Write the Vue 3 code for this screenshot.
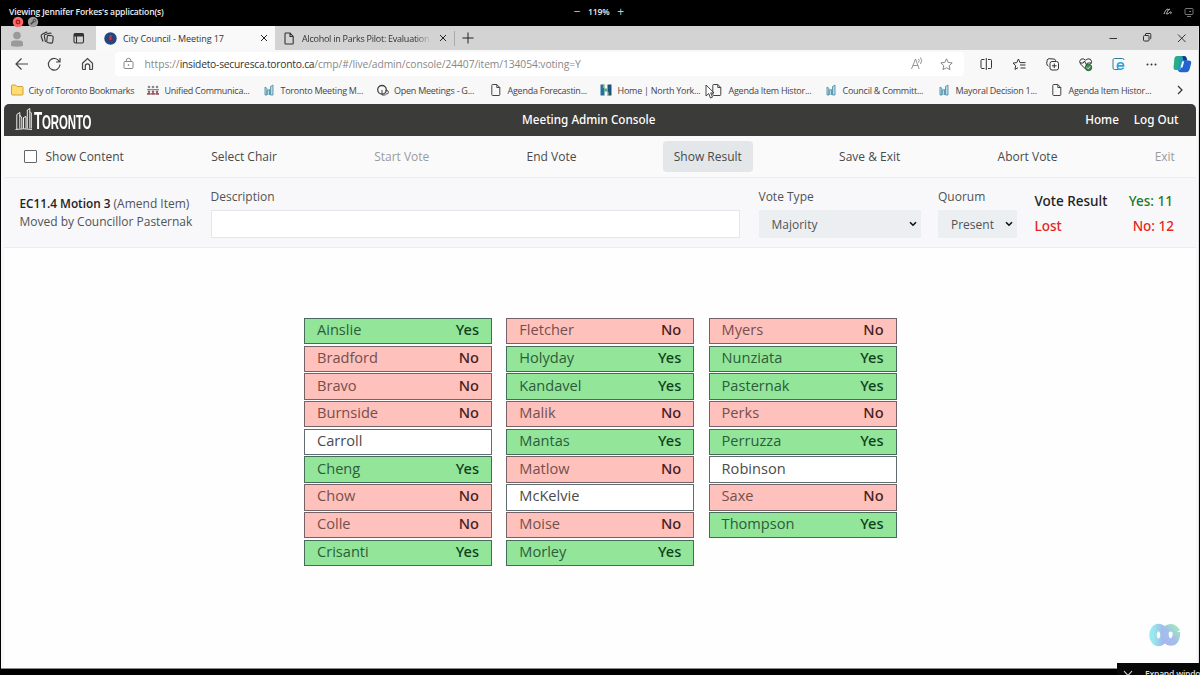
<script setup>
const bookmarks = [
  { icon: 'folder', text: 'City of Toronto Bookmarks', w: 136 },
  { icon: 'people', text: 'Unified Communica...', w: 116 },
  { icon: 'city', text: 'Toronto Meeting M...', w: 113.5 },
  { icon: 'key', text: 'Open Meetings - G...', w: 113.5 },
  { icon: 'doc', text: 'Agenda Forecastin...', w: 110 },
  { icon: 'h', text: 'Home | North York...', w: 111 },
  { icon: 'doc', text: 'Agenda Item Histor...', w: 114 },
  { icon: 'city', text: 'Council & Committ...', w: 113 },
  { icon: 'city', text: 'Mayoral Decision 1...', w: 113 },
  { icon: 'doc', text: 'Agenda Item Histor...', w: 110 }
]
const parse = s => s.split(' ').map(p => {
  const [name, v] = p.split(':')
  return { name, vote: v === 'y' ? 'Yes' : v === 'n' ? 'No' : '' }
})
const columns = [
  parse('Ainslie:y Bradford:n Bravo:n Burnside:n Carroll: Cheng:y Chow:n Colle:n Crisanti:y'),
  parse('Fletcher:n Holyday:y Kandavel:y Malik:n Mantas:y Matlow:n McKelvie: Moise:n Morley:y'),
  parse('Myers:n Nunziata:y Pasternak:y Perks:n Perruzza:y Robinson: Saxe:n Thompson:y')
]
</script>

<template>
  <div class="screen">
    <div class="share">
      <span class="viewing">Viewing Jennifer Forkes's application(s)</span>
      <div class="zoomer"><i>−</i><b>119%</b><i>+</i></div>
      <svg class="share-icons" width="36" height="14" viewBox="0 0 36 14" fill="none" stroke="#ccc">
        <path d="M3 9c2-5 4-6 4-4s-3 4-1 4 3-3 4-2-1 2 0 2M7 5l2-1" />
        <rect x="24" y="3.500" width="8" height="6" rx="1" stroke="#777" /><path d="M28 6.500h2M26 11.500h4" stroke="#777" />
      </svg>
    </div>
    <svg class="badges" width="32" height="12" viewBox="0 0 32 12">
      <circle cx="8" cy="6" r="5.3" fill="#f66a6a" /><circle cx="8" cy="6" r="1.7" fill="none" stroke="#b31c1c" stroke-width="1.5" />
      <circle cx="23" cy="6" r="5.2" fill="#9a9a9a" /><path d="M20.800 8.200l3-3" stroke="#444" stroke-width="1.500" /><circle cx="24.500" cy="4.500" r="1.300" fill="none" stroke="#444" />
    </svg>

    <div class="browser">
      <div class="tabs">
        <svg class="lead" width="92" height="24" viewBox="0 0 92 24" fill="none" stroke="#333" stroke-width="1.1">
          <g fill="#9a9a9a" stroke="none"><circle cx="13" cy="9.500" r="3.800" /><path d="M7 20v-2.600q0-3 3-3h6q3 0 3 3V20q-6 1.500-12 0z" /></g>
          <rect x="43" y="9.500" width="6" height="7.500" rx="1.500" transform="rotate(6 46 13)" />
          <path d="M41.500 16l-1.200-5.700q-.2-1.400 1-1.800l4.500-1.500q1-.2 1.500.8M39 15.500l-1.800-5q-.4-1.500 1-2.200l3.800-2q.8-.3 1.400.1" />
          <rect x="70" y="7.500" width="9.500" height="9.500" rx="1.500" /><path d="M70 9h9.500" stroke-width="3" /><path d="M72.500 10v7" />
        </svg>
        <div class="tab active">
          <svg width="13" height="13" viewBox="0 0 13 13"><circle cx="6.500" cy="6.500" r="6.200" fill="#1a4a86" /><path d="M4 10V6l1-3h3l1 3v4z" fill="#5c3158" /><path d="M5.500 3h2v5h-2z" fill="#bb3e50" /></svg>
          <span class="tabname">City Council - Meeting 17</span>
          <svg class="x" width="8" height="8" viewBox="0 0 8 8" stroke="#222"><path d="M1 1l6 6M7 1L1 7" /></svg>
        </div>
        <div class="tab second">
          <svg width="10" height="13" viewBox="0 0 10 13" fill="none" stroke="#333" stroke-width="1.100"><path d="M1 1.800q0-.8.8-.8H6l3.200 3.500v6.700q0 .8-.8.800H1.800q-.8 0-.8-.8zM6 1v3.500h3.200" /></svg>
          <span class="tabname">Alcohol in Parks Pilot: Evaluation</span>
          <svg class="x" width="8" height="8" viewBox="0 0 8 8" stroke="#222"><path d="M1 1l6 6M7 1L1 7" /></svg>
        </div>
        <svg class="plus" width="12" height="12" viewBox="0 0 12 12" stroke="#222"><path d="M6 .5v11M.5 6h11" /></svg>
        <svg class="win" width="90" height="24" viewBox="0 0 90 24" fill="none" stroke="#333">
          <path d="M8.500 12.500h7.500" /><rect x="42.500" y="9.500" width="5.500" height="5.500" rx="1" /><path d="M44.500 9V8q0-.5.5-.5h4q.8 0 .8.800v4q0 .7-1 .7" />
          <path d="M77 8.500l7.500 7.500M84.500 8.500L77 16" />
        </svg>
      </div>

      <div class="address">
        <svg class="nav" width="98" height="27" viewBox="-3 0 98 27" fill="none" stroke="#444" stroke-width="1.200">
          <path d="M12 14h12M17.500 8.500L12 14l5.500 5.500" />
          <path d="M55.300 11.500A5.800 5.800 0 1 0 56 14.500M56 8v4h-4" />
          <path d="M78.500 13.200l5-4.700 5 4.700v5.500q0 .8-.8.8h-2v-3.500q0-2.200-2.200-2.200t-2.200 2.200v3.500h-2q-.8 0-.8-.8z" />
        </svg>
        <div class="urlbox">
          <svg class="lock" width="11" height="13" viewBox="0 0 11 13" fill="none" stroke="#888"><rect x="1" y="4.500" width="9" height="7" rx="1" /><path d="M3 4.500q0-3.300 2.500-3.300T8 4.500" /><circle cx="5.500" cy="8" r=".5" /></svg>
          <span class="url">https://</span><span class="url host">insideto-securesca.toronto.ca</span><span class="url path">/cmp/#/live/admin/console/24407/item/134054:voting=Y</span>
          <svg class="fav" width="46" height="20" viewBox="0 0 46 20" fill="none" stroke="#888">
            <path d="M2.500 15L6.500 5l3.700 10M4 11.500h5M9.500 5q1.300 1.300 0 3.500M11.500 3.500q2.400 3 0 6.500" stroke-width=".9" />
            <path d="M37.500 4.800l1.700 3.600 4 .5-3 2.800.8 4-3.500-2-3.500 2 .8-4-3-2.800 4-.5z" />
          </svg>
        </div>
        <svg class="tools" width="232" height="27" viewBox="964 0 232 27" fill="none" stroke="#333">
          <path d="M984.500 9.500H982q-1 0-1 1v7q0 1 1 1h2.500M988 9.500h2.500q1 0 1 1v7q0 1-1 1H988M986.300 8v12" />
          <path d="M1018 17.700l-3 1.700.7-3.700-2.700-2.600 3.800-.5 1.600-3.600 1.600 3.600h5.500M1020 15h5.500M1020.500 18h5" />
          <rect x="1050" y="11.500" width="8.500" height="8.500" rx="2" /><path d="M1054.300 13.500v4.500M1052 15.800h4.500M1048.500 16.200q-1.800-.7-1.800-3l.5-3q.5-1.600 2-1.500l5 .4q1.500.4 1.500 1.700" />
          <path d="M1085.500 19l-5-5q-2-3 .5-4.800 2.300-1.200 4.500 1 2.500-2.200 4.800-1 2.300 1.800.5 4.800M1080 13h3.200l1.300-2 2 4 1-2h4" />
          <circle cx="1088.500" cy="17.500" r="3.200" fill="#438b52" stroke="#245f36" /><path d="M1087 17.500l1.200 1.200 2-2.300" stroke="#fff" stroke-width=".8" />
          <path d="M1118 19.500h-3.500q-1.500 0-1.500-1.500v-8q0-1.500 1.500-1.500h8q1.500 0 1.500 1.500" stroke="#367c91" />
          <path d="M1123.500 17.600q-1 1.700-3 1.700-3.100 0-3.100-3.400 0-3.200 3.200-3.200 3 0 3 3.200h-6" stroke="#29a4d8" stroke-width="1.600" />
          <g fill="#333" stroke="none"><circle cx="1147.500" cy="14.500" r="1" /><circle cx="1151.500" cy="14.500" r="1" /><circle cx="1155.500" cy="14.500" r="1" /></g>
          <g stroke="none"><path d="M1177 6h7q2 0 2.600 2l.7 2.500h-2q-2 0-2.700 2.200l-1.700 5.300q-.7 2-2.500 2h-2q-2.500 0-2-3l2-8.500q.6-2.500 3-2.500z" fill="#2196c9" /><path d="M1174.400 8.200Q1175.200 6 1177 6h4l-3.500 13q-.4 1-1.500 1-2.800 0-2.400-3z" fill="#28ad86" /><path d="M1184 10.500h4.500q3.300 0 2.600 3l-1.500 5.800q-.8 3-3.600 3h-5q-2.500 0-3.300-2.300h1q1.600 0 2.300-2z" fill="#2463cf" /><path d="M1182.500 6h1.500q2 0 2.600 2l.7 2.500h-4z" fill="#163b85" /><path d="M1182.200 11.500h2l-1.700 6h-2z" fill="#eefaff" /></g>
        </svg>
      </div>

      <div class="bookmarks">
        <div v-for="(b, i) in bookmarks" :key="i" class="bm" :style="{ width: b.w + 'px' }">
          <svg width="14" height="14" viewBox="0 0 14 14" fill="none" stroke="#444">
            <g v-if="b.icon === 'folder'" stroke="#c7a23c"><path d="M1.500 3q0-1 1-1h3l1.500 1.500h5q1 0 1 1V11q0 1-1 1h-9.500q-1 0-1-1z" fill="#ffdd73" /></g>
            <g v-else-if="b.icon === 'people'" stroke="none"><g fill="#888"><circle cx="3" cy="4" r="1.300" /><circle cx="7" cy="4" r="1.300" /><circle cx="11" cy="4" r="1.300" /><path d="M1 6h12v1.200H1z" /></g><g fill="#94575e"><circle cx="3" cy="8.700" r="1.200" /><circle cx="7" cy="8.700" r="1.200" /><circle cx="11" cy="8.700" r="1.200" /><path d="M1 10h3.700v1.700H1zM5.200 10h3.700v1.700H5.200zM9.400 10H13v1.700H9.400z" /></g></g>
            <g v-else-if="b.icon === 'city'" stroke="#5592a8" stroke-width=".9"><path d="M3 12V4l2 1.500V12zM5 12V7.500l2.500-1V12M8.500 12V3.500L11 2v10z" fill="#b5dae6" /></g>
            <g v-else-if="b.icon === 'key'"><circle cx="6" cy="6.800" r="4.300" stroke-width="1.300" /><path d="M6 7v5h3.500M9.500 7.500q3-.5 3 1.700t-3 1.800" /></g>
            <g v-else-if="b.icon === 'h'" stroke="none"><path d="M1.500 1.500H5.500v11h-4z" fill="#277096" /><path d="M8.500 1.500h4v11h-4z" fill="#1c5381" /><path d="M5.500 5.500h3v3h-3z" fill="#4eaa92" /><path d="M4.300 1.500h1.500v3.500H4.300zM8 9h1.500v3.500H8z" fill="#b6cf5d" /></g>
            <path v-else d="M2.800 2.300q0-.8.800-.8h4.200l3 3v7.200q0 .8-.8.800H3.600q-.8 0-.8-.8zM7.800 1.500v3h3" />
          </svg>
          <span>{{ b.text }}</span>
        </div>
        <svg class="more" width="8" height="10" viewBox="0 0 8 10" fill="none" stroke="#333" stroke-width="1.200"><path d="M2 1l4 4-4 4" /></svg>
        <svg class="cursor" width="11" height="16" viewBox="0 0 11 16" fill="#fff" stroke="#333" stroke-width=".9"><path d="M1 1v11l2.700-2.500 1.800 4.500 2-.9-1.800-4.200H9z" /></svg>
      </div>

      <div class="app">
        <header class="top">
          <div class="logo">
            <svg width="19" height="31" viewBox="0 -1 19 31" fill="none" stroke="#fff" stroke-width=".9"><path d="M1.800 24V9.500l3-2V23.500M4.800 10l2 3v10.500M8.500 23.500V12.500l2.500-1v12M12.300 23.500V5l2.500-1.500v20M14.800 6.500l1.500 1.500v15.500M.5 24.500q8-1.500 16.500 0" /></svg>
            <span class="wordmark"><big>T</big>ORONTO</span>
          </div>
          <span class="title">Meeting Admin Console</span>
          <nav><span>Home</span><span>Log Out</span></nav>
        </header>

        <div class="bar">
          <label class="check"><i></i>Show Content</label>
          <span class="btn">Select Chair</span>
          <span class="btn off">Start Vote</span>
          <span class="btn">End Vote</span>
          <span class="btn on">Show Result</span>
          <span class="btn">Save &amp; Exit</span>
          <span class="btn">Abort Vote</span>
          <span class="btn off">Exit</span>
        </div>

        <div class="motion">
          <div class="item"><p><b>EC11.4 Motion 3</b> (Amend Item)</p><p>Moved by Councillor Pasternak</p></div>
          <div class="field desc"><span>Description</span><div class="input"></div></div>
          <div class="field type"><span>Vote Type</span><div class="select">Majority<svg width="8" height="6" viewBox="0 0 8 6" fill="none" stroke="#111" stroke-width="1.600"><path d="M1 1.200l3 3 3-3" /></svg></div></div>
          <div class="field quorum"><span>Quorum</span><div class="select">Present<svg width="8" height="6" viewBox="0 0 8 6" fill="none" stroke="#111" stroke-width="1.600"><path d="M1 1.200l3 3 3-3" /></svg></div></div>
          <div class="result">
            <div><span>Vote Result</span><span class="green">Yes: 11</span></div>
            <div class="red"><span>Lost</span><span>No: 12</span></div>
          </div>
        </div>

        <main class="votes">
          <div v-for="(col, i) in columns" :key="i" class="col">
            <div v-for="m in col" :key="m.name" class="member" :class="m.vote.toLowerCase()"><span>{{ m.name }}</span><b>{{ m.vote }}</b></div>
          </div>
        </main>
      </div>

      <svg class="mark" width="34" height="26" viewBox="0 0 34 26" fill="none" stroke-width="7.500">
        <defs>
          <linearGradient id="ga"><stop offset="0" stop-color="#9ae9ee" /><stop offset="1" stop-color="#9fb6ea" /></linearGradient>
          <linearGradient id="gb" x1="0" y1="1" x2="1" y2="0"><stop offset="0" stop-color="#a9b6f0" /><stop offset=".5" stop-color="#a2c0ea" /><stop offset="1" stop-color="#a3e6be" /></linearGradient>
        </defs>
        <ellipse cx="11.500" cy="13" rx="5.500" ry="7.500" stroke="url(#ga)" /><path d="M30 10Q26 4.500 22 6q-5 1.500-4 7.500 1 6.500 5.500 6.500 6 0 6-10" stroke="url(#gb)" />
      </svg>
    </div>
    <div class="expand">
      <svg width="10" height="7" viewBox="0 0 10 7" fill="none" stroke="#ddd" stroke-width="1.100"><path d="M1 1l4 4.500L9 1" /></svg>
      <span>Expand window</span>
    </div>
  </div>
</template>

<style>
html, body { margin: 0; background: #000; overflow: hidden; }
</style>
<style scoped>
* { box-sizing: border-box; }
svg { display: block; flex: none; }
p { margin: 0; }
.screen { position: relative; width: 1200px; height: 675px; overflow: hidden; background: #000; font-family: "Open Sans", "Noto Sans", sans-serif; white-space: nowrap; display: flex; flex-direction: column; }
.share { height: 26px; flex: none; display: flex; align-items: center; padding: 0 3px 3px 9px; color: #eee; font-size: 8.6px; font-weight: 600; letter-spacing: -.17px; }
.viewing { width: 564px; }
.zoomer { display: flex; align-items: center; gap: 7px; }
.zoomer i { font-style: normal; font-weight: 400; font-size: 12px; line-height: 12px; color: #ccc; width: 8px; text-align: center; }
.zoomer b { font-weight: 600; }
.share-icons { margin-left: auto; }
.badges { position: absolute; left: 10px; top: 16px; z-index: 3; }
.browser { position: relative; margin: 0 1px 0 1px; height: 643px; background: #f8f8f9; border-bottom: 1px solid #8d8d8d; border-right: 1px solid #ddd; display: flex; flex-direction: column; }
.tabs { height: 24px; flex: none; background: #d3d3d3; display: flex; align-items: center; padding-left: 3px; font-size: 9px; }
.tab { height: 24px; display: flex; align-items: center; color: #333; }
.active { width: 179px; background: #f9f9fa; padding: 0 7px 0 7.5px; }
.active .tabname { margin-left: 6.5px; letter-spacing: -.1px; }
.second { width: 180px; padding: 0 7px 0 9px; border-right: 1px solid #aaa; height: 15px; }
.second .tabname { margin-left: 8px; letter-spacing: -.25px; width: 129px; overflow: hidden; -webkit-mask-image: linear-gradient(90deg, #000 88%, transparent); mask-image: linear-gradient(90deg, #000 88%, transparent); }
.x { margin-left: auto; }
.plus { margin-left: 6.5px; }
.win { margin-left: auto; margin-right: 7px; }
.address { height: 27px; flex: none; display: flex; align-items: center; padding-top: 1px; }
.nav { width: 98px; margin-right: 16px; }
.urlbox { width: 849px; height: 24px; background: #fff; border-radius: 4px; display: flex; align-items: center; padding-left: 8px; }
.lock { margin-right: 10.5px; }
.url { font-size: 10.3px; color: #888; }
.host { letter-spacing: -.24px; color: #333; }
.path { letter-spacing: -.095px; }
.fav { margin-left: auto; margin-right: 9px; }
.tools { width: 232px; }
.address svg { position: relative; top: -.5px; }
.bookmarks { height: 27px; flex: none; display: flex; align-items: center; padding: 0 0 1px 9px; font-size: 9px; letter-spacing: -.25px; color: #444; position: relative; }
.bm { display: flex; align-items: center; gap: 4.5px; flex: none; }
.more { margin-left: 16px; }
.cursor { position: absolute; left: 704px; top: 7px; }
.app { margin: 0 2px 0 3px; flex: 1; background: #fff; display: flex; flex-direction: column; border-radius: 5px 5px 0 0; overflow: hidden; }
.top { height: 31.5px; flex: none; background: #3b3b3a; color: #fff; display: flex; align-items: center; font: 500 11.7px "Noto Sans", "Open Sans", sans-serif; padding: 0 17.5px 0 11px; }
.title, nav { margin-top: -1px; }
.logo { width: 80px; margin-right: 427px; display: flex; align-items: center; }
.wordmark { font: 700 21px/30px "Liberation Sans", sans-serif; transform: scaleX(.545); transform-origin: 0 50%; padding-top: 5px; letter-spacing: -.2px; }
.wordmark big { font-size: 24.5px; line-height: 20px; }
nav { margin-left: auto; display: flex; gap: 15px; }
.bar { height: 42px; flex: none; background: #fafafb; border-bottom: 1px solid #ececef; display: flex; align-items: center; justify-content: space-between; padding: 0 10px 0 20px; font-size: 12px; color: #484b4a; }
.check { display: flex; align-items: center; padding-right: 1px; }
.check i { width: 13px; height: 13px; border: 1.5px solid #666; margin-right: 8.5px; border-radius: 1px; background: #fff; }
.btn { padding: 0 11px; height: 31px; line-height: 31px; border-radius: 4px; }
.off { color: #9a9c9c; }
.on { background: #e4e7e9; }
.motion { height: 70px; flex: none; background: #f8f8fa; border-bottom: 1px solid #ececf0; display: flex; font-size: 12px; color: #505354; padding-left: 15.5px; }
.item { width: 191px; padding-top: 16.5px; line-height: 18px; letter-spacing: -.01px; }
.item b { font-weight: 600; font-size: 11.8px; color: #222; }
.field span { display: block; height: 18px; line-height: 18px; }
.field { padding-top: 10.500px; }
.input { margin-top: 4px; height: 28px; border: 1px solid #e6e6ea; background: #fff; }
.desc { width: 529.5px; margin-right: 18.5px; }
.type { width: 162.5px; margin-right: 17px; }
.quorum { width: 78.5px; margin-right: 18px; }
.select { margin-top: 4px; height: 28px; background: #eceff1; display: flex; align-items: center; justify-content: space-between; padding: 0 4px 0 13px; }
.result { width: 139.5px; padding-top: 11px; font: 500 13.5px/25.5px "Noto Sans", "Open Sans", sans-serif; color: #222; }
.result div { display: flex; justify-content: space-between; }
.result .green { color: #207a28; padding-right: 1px; }
.result .red { color: #e82520; }
.votes { display: flex; gap: 14.3px; padding: 70.500px 0 0 300px; background: #fefefe; flex: 1; }
.col { width: 188px; display: flex; flex-direction: column; gap: 1.300px; }
.member { height: 26.400px; border: 1px solid #5f6c70; background: #fff; display: flex; align-items: center; justify-content: space-between; padding: 0 12px; font-size: 14.6px; line-height: 20px; color: #4b4b4b; }
.member span, .member b { position: relative; top: -1.9px; }
.member b { font: 500 14.6px/20px "Noto Sans", "Open Sans", sans-serif; }
.member.yes { background: #92e599; color: #2c5d39; border-color: #466b5a; }
.member.yes b { color: #11401c; }
.member.no { background: #ffc1bb; color: #74504d; border-color: #746266; }
.member.no b { color: #45201d; }
.mark { position: absolute; left: 1146px; top: 596px; }
.expand { position: absolute; left: 1117px; top: 663px; width: 83px; height: 12px; overflow: hidden; background: #080808; color: #ddd; display: flex; padding: 7px 0 0 6px; font-size: 8.6px; font-weight: 600; line-height: 9px; letter-spacing: -.25px; }
.expand span { margin-left: 12px; flex: none; }
</style>
